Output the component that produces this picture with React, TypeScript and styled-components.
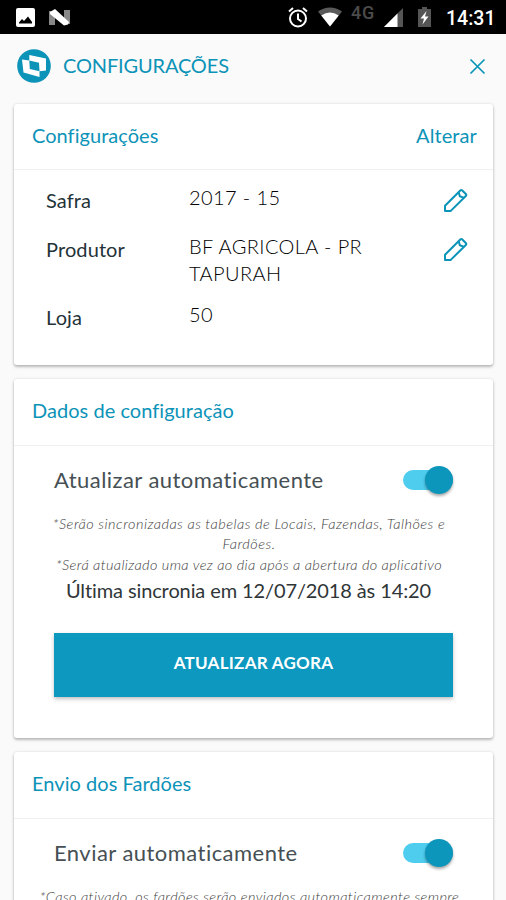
import React from 'react';
import styled, { createGlobalStyle } from 'styled-components';

const BLUE = '#0c93b8';

const GlobalStyle = createGlobalStyle`
  * { box-sizing: border-box; }
  html, body { margin: 0; height: 100%; overflow: hidden; background: #fafafa; }
  body { font-family: Lato, "Open Sans", sans-serif; }
`;

const Screen = styled.div`
  width: 506px;
  height: 900px;
  overflow: hidden;
  background: #fafafa;
`;

const StatusBar = styled.div`
  height: 34px;
  background: #000;
  display: flex;
  align-items: center;
  padding: 0 11px 0 16px;
`;

const StatusSvg = styled.svg<{ $gap?: number }>`
  display: block;
  flex: none;
  margin-left: ${(p) => p.$gap ?? 0}px;
`;

const Network = styled.span`
  margin: 0 0 8px 9px;
  width: 25px;
  color: #4b4b4b;
  font: 500 18px/20px Roboto, sans-serif;
  letter-spacing: 0.8px;
`;

const Clock = styled.span`
  margin-left: 15px;
  width: 49px;
  color: #fff;
  font: 500 19.5px/22px Roboto, sans-serif;
  white-space: nowrap;
  padding-top: 3px;
`;

const Spacer = styled.div`
  flex: 1;
`;

const TitleBar = styled.header`
  height: 70px;
  display: flex;
  align-items: center;
  padding: 0 20px 6px 17px;
`;

const Title = styled.h1`
  flex: 1;
  margin: 0 0 0 12px;
  padding-bottom: 2px;
  color: ${BLUE};
  font-size: 20px;
  font-weight: 400;
  line-height: 24px;
  letter-spacing: -0.15px;
`;

const IconButton = styled.button`
  display: block;
  padding: 0;
  border: 0;
  background: none;
  line-height: 0;
`;

const Card = styled.section<{ $height: number }>`
  height: ${(p) => p.$height}px;
  margin: 0 13px 14px 14px;
  background: #fff;
  border-radius: 3px;
  box-shadow: 0 2px 3px rgba(0, 0, 0, 0.24), 0 0 3px rgba(0, 0, 0, 0.12);
`;

const CardHeader = styled.div<{ $height?: number }>`
  height: ${(p) => p.$height ?? 67}px;
  padding: 0 16px 4px 18px;
  display: flex;
  align-items: center;
  justify-content: space-between;
  border-bottom: 1px solid #f0f0f0;
`;

const CardTitle = styled.h2`
  margin: 0;
  color: ${BLUE};
  font-size: 20px;
  font-weight: 400;
  line-height: 24px;
  letter-spacing: 0.04px;
`;

const LinkButton = styled.button`
  padding: 0;
  border: 0;
  background: none;
  color: ${BLUE};
  font: 400 20px/24px Lato, sans-serif;
  letter-spacing: 0.1px;
`;

const Fields = styled.div`
  padding: 14px 25px 0 32px;
`;

const Field = styled.div<{ $height: number }>`
  height: ${(p) => p.$height}px;
  display: grid;
  grid-template-columns: 143px 1fr 25px;
  align-items: start;
`;

const FieldName = styled.span`
  padding-top: 4px;
  color: #1f3339;
  font-size: 20px;
  line-height: 24px;
  letter-spacing: 0.1px;
`;

const FieldValue = styled.span`
  width: 200px;
  color: #000;
  font-size: 20px;
  font-weight: 300;
  line-height: 26.5px;
  letter-spacing: 0.4px;
`;

const PencilButton = styled(IconButton)`
  padding-top: 4px;
`;

const ToggleRow = styled.div`
  height: 68px;
  padding: 0 40px;
  display: flex;
  align-items: center;
  justify-content: space-between;
`;

const ToggleLabel = styled.span`
  color: #465054;
  font-size: 22px;
  line-height: 28px;
  letter-spacing: 0.46px;
`;

const Track = styled.button`
  width: 50px;
  height: 20px;
  padding: 0;
  border: 0;
  border-radius: 10px;
  background: #4fcdef;
  display: flex;
  align-items: center;
  justify-content: flex-end;
`;

const Thumb = styled.span`
  width: 28px;
  height: 28px;
  flex: none;
  border-radius: 50%;
  background: #0d96bb;
  box-shadow: 0 2px 3px rgba(0, 0, 0, 0.35);
`;

const Note = styled.p<{ $spacing: number }>`
  margin: 0;
  color: #404040;
  font-size: 14.5px;
  font-style: italic;
  font-weight: 300;
  line-height: 20px;
  letter-spacing: ${(p) => p.$spacing}px;
  text-align: center;
  white-space: nowrap;
`;

const LastSync = styled.p`
  margin: 1px 0 0;
  padding-right: 10px;
  color: #303638;
  font-size: 20px;
  line-height: 28px;
  letter-spacing: -0.11px;
  text-align: center;
  white-space: nowrap;
`;

const Notes = styled.div`
  display: flex;
  flex-direction: column;
  gap: 1px;
`;

const SyncNotes = styled(Notes)`
  padding-right: 9px;
`;

const SendNotes = styled(Notes)`
  padding-right: 8px;
`;

const PrimaryButton = styled.button`
  display: block;
  width: 399px;
  height: 64px;
  margin: 29px 0 0 40px;
  padding: 0 0 5px;
  border: 0;
  background: #0d98bf;
  box-shadow: 0 2px 4px rgba(0, 0, 0, 0.25);
  color: #fff;
  font: 700 17px/24px Lato, sans-serif;
  letter-spacing: 0.26px;
`;

function Pencil() {
  return (
    <svg width="25" height="25" viewBox="0 0 25 25" fill="none" stroke={BLUE} strokeWidth="2" strokeLinejoin="round">
      <path d="M2 23V17.800L17.300 2.500Q18.300 1.500 19.300 2.500L22.800 6Q23.800 7 22.800 8L8 22.600Q7.500 23 7 23Z" />
      <path d="M15.800 4.500 16.800 8.200 20.600 9.600" />
    </svg>
  );
}

function Toggle() {
  return (
    <Track role="switch" aria-checked="true">
      <Thumb />
    </Track>
  );
}

export default function App() {
  return (
    <Screen>
      <GlobalStyle />
      <StatusBar>
        <StatusSvg width="19" height="19" viewBox="0 0 19 19">
          <rect width="19" height="19" rx="2" fill="#fff" />
          <path d="M3 15.500V14.500L6 11l2 2 4-4.500L16 14v1.500Z" fill="#000" />
        </StatusSvg>
        <StatusSvg $gap={14} width="21" height="17" viewBox="0 0 21 17">
          <path d="M0 2h6v14H0Z" fill="#888" />
          <path d="M15 1h6v14h-6Z" fill="#888" />
          <path d="M1 3 6 0 20 13 19 15.500 15 16.500 1 5Z" fill="#fff" />
        </StatusSvg>
        <Spacer />
        <StatusSvg width="20" height="21" viewBox="0 0 20 21" fill="none" stroke="#fff" strokeWidth="2">
          <circle cx="10" cy="11.500" r="8" />
          <path d="M10 6.500V12l3.500 2.500M1 4.500 5 1M19 4.500 15 1" />
        </StatusSvg>
        <StatusSvg $gap={10} width="24" height="20" viewBox="0 0 24 20">
          <path d="M0 4.500Q12-3.500 24 4.500L12 19.500Z" fill="#5a5a5a" />
          <path d="M3.300 8.500Q12 2.500 20.700 8.500L12 19.500Z" fill="#fff" />
        </StatusSvg>
        <Network>4G</Network>
        <StatusSvg $gap={7} width="20" height="20" viewBox="0 0 20 18">
          <path d="M20 0V20H0Z" fill="#555" />
          <path d="M14.500 5.500V20H0Z" fill="#fff" />
        </StatusSvg>
        <StatusSvg $gap={15} width="13" height="20" viewBox="0 0 13 20">
          <path d="M4 0h5v2h4v18H0V2h4Z" fill="#555" />
          <path d="M8.500 4 2.500 11.500H6L4.500 17.500 10.500 9.500H7Z" fill="#fff" />
        </StatusSvg>
        <Clock>14:31</Clock>
      </StatusBar>

      <TitleBar>
        <svg width="34" height="34" viewBox="0 0 34 34">
          <circle cx="17" cy="17" r="16.800" fill={BLUE} />
          <path d="M5 10.500 12.300 11.500V6L29 9.500V21.500L22.500 22.300V28L6.500 23.500Z" fill="#fff" />
          <path d="M12.300 11.500 22 13.800 22.500 22.300 12.800 20Z" fill={BLUE} />
        </svg>
        <Title>CONFIGURAÇÕES</Title>
        <IconButton aria-label="Fechar">
          <svg width="17" height="17" viewBox="0 0 17 17" fill="none" stroke={BLUE} strokeWidth="1.700">
            <path d="m1.500 1.500 14 14m0-14-14 14" />
          </svg>
        </IconButton>
      </TitleBar>

      <Card $height={261}>
        <CardHeader $height={66}>
          <CardTitle>Configurações</CardTitle>
          <LinkButton>Alterar</LinkButton>
        </CardHeader>
        <Fields>
          <Field $height={49}>
            <FieldName>Safra</FieldName>
            <FieldValue>2017 - 15</FieldValue>
            <PencilButton aria-label="Editar safra"><Pencil /></PencilButton>
          </Field>
          <Field $height={68}>
            <FieldName>Produtor</FieldName>
            <FieldValue>BF AGRICOLA - PR TAPURAH</FieldValue>
            <PencilButton aria-label="Editar produtor"><Pencil /></PencilButton>
          </Field>
          <Field $height={49}>
            <FieldName>Loja</FieldName>
            <FieldValue>50</FieldValue>
          </Field>
        </Fields>
      </Card>

      <Card $height={359}>
        <CardHeader>
          <CardTitle>Dados de configuração</CardTitle>
        </CardHeader>
        <ToggleRow>
          <ToggleLabel>Atualizar automaticamente</ToggleLabel>
          <Toggle />
        </ToggleRow>
        <SyncNotes>
          <Note $spacing={0.48}>
            *Serão sincronizadas as tabelas de Locais, Fazendas, Talhões e
            <br />
            Fardões.
          </Note>
          <Note $spacing={0.38}>*Será atualizado uma vez ao dia após a abertura do aplicativo</Note>
        </SyncNotes>
        <LastSync>Última sincronia em 12/07/2018 às 14:20</LastSync>
        <PrimaryButton>ATUALIZAR AGORA</PrimaryButton>
      </Card>

      <Card $height={359}>
        <CardHeader>
          <CardTitle>Envio dos Fardões</CardTitle>
        </CardHeader>
        <ToggleRow>
          <ToggleLabel>Enviar automaticamente</ToggleLabel>
          <Toggle />
        </ToggleRow>
        <SendNotes>
          <Note $spacing={0.41}>*Caso ativado, os fardões serão enviados automaticamente sempre</Note>
        </SendNotes>
      </Card>
    </Screen>
  );
}
